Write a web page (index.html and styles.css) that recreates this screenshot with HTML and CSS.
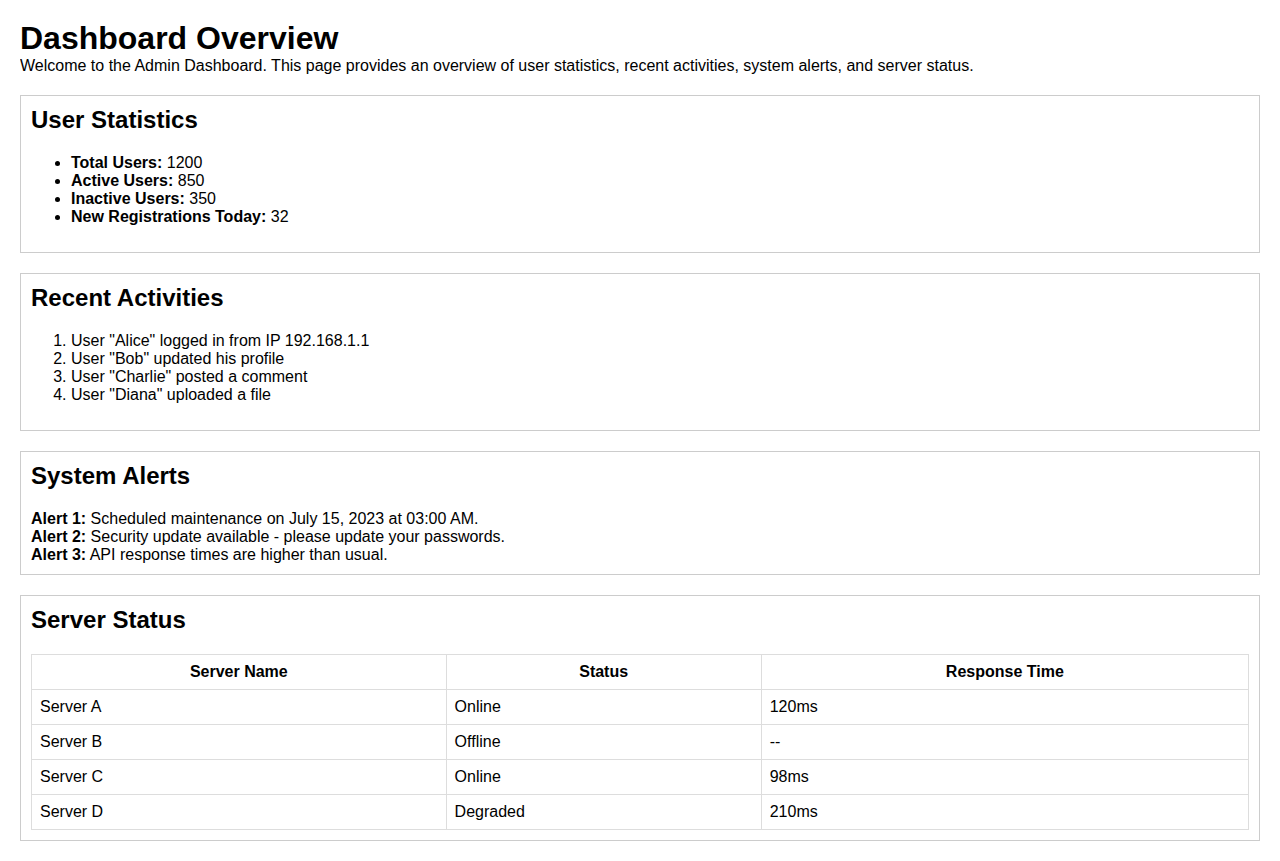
FILE: index.html
```html
<!DOCTYPE html>
<html lang="en">
<head>
<meta charset="utf-8">
<title>Admin Dashboard</title>
<link rel="stylesheet" href="styles.css">
</head>
<body>
<h1>Dashboard Overview</h1>
<p class="intro">Welcome to the Admin Dashboard. This page provides an overview of user statistics, recent activities, system alerts, and server status.</p>

<section class="section">
  <h2>User Statistics</h2>
  <ul>
    <li><strong>Total Users:</strong> 1200</li>
    <li><strong>Active Users:</strong> 850</li>
    <li><strong>Inactive Users:</strong> 350</li>
    <li><strong>New Registrations Today:</strong> 32</li>
  </ul>
</section>

<section class="section">
  <h2>Recent Activities</h2>
  <ol>
    <li>User "Alice" logged in from IP 192.168.1.1</li>
    <li>User "Bob" updated his profile</li>
    <li>User "Charlie" posted a comment</li>
    <li>User "Diana" uploaded a file</li>
  </ol>
</section>

<section class="section">
  <h2>System Alerts</h2>
  <div class="alert"><strong>Alert 1:</strong> Scheduled maintenance on July 15, 2023 at 03:00 AM.</div>
  <div class="alert"><strong>Alert 2:</strong> Security update available - please update your passwords.</div>
  <div class="alert"><strong>Alert 3:</strong> API response times are higher than usual.</div>
</section>

<section class="section">
  <h2>Server Status</h2>
  <table class="servers">
    <thead>
      <tr><th>Server Name</th><th>Status</th><th>Response Time</th></tr>
    </thead>
    <tbody>
      <tr><td>Server A</td><td>Online</td><td>120ms</td></tr>
      <tr><td>Server B</td><td>Offline</td><td>--</td></tr>
      <tr><td>Server C</td><td>Online</td><td>98ms</td></tr>
      <tr><td>Server D</td><td>Degraded</td><td>210ms</td></tr>
    </tbody>
  </table>
</section>
</body>
</html>
```

FILE: styles.css
```css
body {
  margin: 20px;
  font-family: "Liberation Sans", Arial, sans-serif;
  font-size: 16px;
  color: #000;
  background: #fff;
}

h1 {
  font-size: 32px;
  margin: 0;
}

.intro {
  margin: 0 0 20px 0;
}

.section {
  border: 1px solid #ccc;
  padding: 10px;
  margin-bottom: 20px;
}

.section h2 {
  font-size: 24px;
  margin: 0 0 20px 0;
}

.section ul,
.section ol {
  margin: 0 0 16px 0;
  padding-left: 40px;
}

.servers {
  width: 100%;
  border-collapse: collapse;
}

.servers th,
.servers td {
  border: 1px solid #ddd;
  padding: 8px;
  text-align: left;
}

.servers th {
  text-align: center;
}
```
